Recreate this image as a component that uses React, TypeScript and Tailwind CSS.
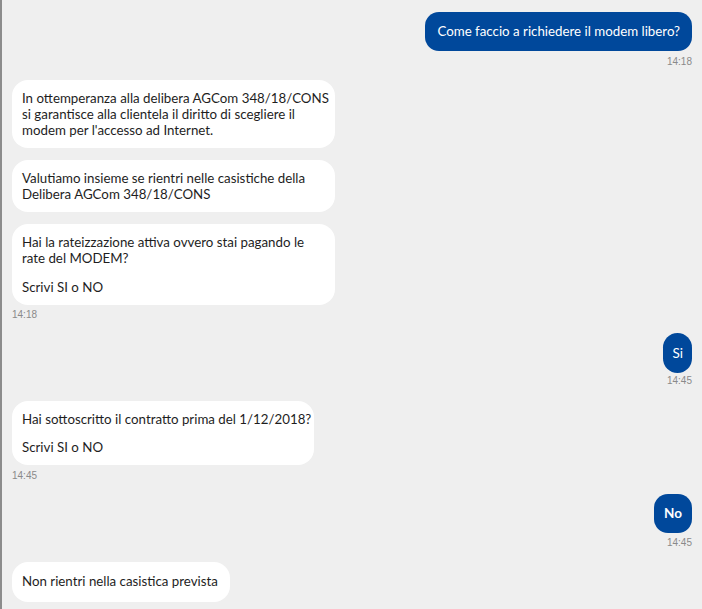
import React from "react";

const font = { fontFamily: "Lato, 'Noto Sans', sans-serif" };

function Time({ t }: { t: string }) {
  return (
    <div className="mt-[5px] h-[12px] leading-[12px] text-[10px] text-[#8a8a8a]" style={{ fontFamily: "'Liberation Sans', Arial, sans-serif" }}>
      {t}
    </div>
  );
}

function BotMsg({ children, w, mt }: { children: React.ReactNode; w: string; mt: string }) {
  return (
    <div className={`shrink-0 whitespace-nowrap bg-white rounded-[16px] px-[10px] py-[10px] min-h-[40px] text-[13.3px] leading-[16px] text-[#1e1e1e] ${w} ${mt}`}>
      {children}
    </div>
  );
}

export default function App() {
  return (
    <div className="w-[702px] h-[609px] overflow-hidden bg-[#efefef] border-l-2 border-[#8c8c8c] pl-[10px] pr-[10px] pt-[12px] flex flex-col" style={font}>
      <div className="shrink-0 flex flex-col items-end">
        <div className="bg-[#00489b] text-white rounded-[14px] h-[39px] flex items-center text-[13.3px] px-[12px] whitespace-nowrap">
          Come faccio a richiedere il modem libero?
        </div>
        <Time t="14:18" />
      </div>

      <BotMsg w="w-[323px]" mt="mt-[12px]">
        In ottemperanza alla delibera AGCom 348/18/CONS
        <br />
        si garantisce alla clientela il diritto di scegliere il
        <br />
        modem per l'accesso ad Internet.
      </BotMsg>

      <BotMsg w="w-[323px]" mt="mt-[12px]">
        Valutiamo insieme se rientri nelle casistiche della
        <br />
        Delibera AGCom 348/18/CONS
      </BotMsg>

      <div className="shrink-0 flex flex-col items-start mt-[12px]">
        <BotMsg w="w-[323px]" mt="">
          Hai la rateizzazione attiva ovvero stai pagando le
          <br />
          rate del MODEM?
          <div className="mt-[13px]">Scrivi SI o NO</div>
        </BotMsg>
        <div className="-mt-[1px]">
          <Time t="14:18" />
        </div>
      </div>

      <div className="shrink-0 flex flex-col items-end mt-[12px]">
        <div className="bg-[#00489b] text-white rounded-[15px] h-[40px] flex items-center text-[13.5px] px-[9px]">
          Si
        </div>
        <div className="-mt-[3px]">
          <Time t="14:45" />
        </div>
      </div>

      <div className="shrink-0 flex flex-col items-start mt-[14px]">
        <BotMsg w="w-[302px]" mt="">
          Hai sottoscritto il contratto prima del 1/12/2018?
          <div className="mt-[12px]">Scrivi SI o NO</div>
        </BotMsg>
        <Time t="14:45" />
      </div>

      <div className="shrink-0 flex flex-col items-end mt-[12px]">
        <div className="bg-[#00489b] text-white rounded-[14px] h-[39px] flex items-center text-[13.5px] font-bold px-[10px]">
          No
        </div>
        <div className="-mt-[1px]">
          <Time t="14:45" />
        </div>
      </div>

      <div className="shrink-0 mt-[13px] bg-white rounded-[16px] px-[10px] h-[40px] flex items-center text-[13.3px] text-[#1e1e1e] w-[218px] whitespace-nowrap">
        Non rientri nella casistica prevista
      </div>
    </div>
  );
}
